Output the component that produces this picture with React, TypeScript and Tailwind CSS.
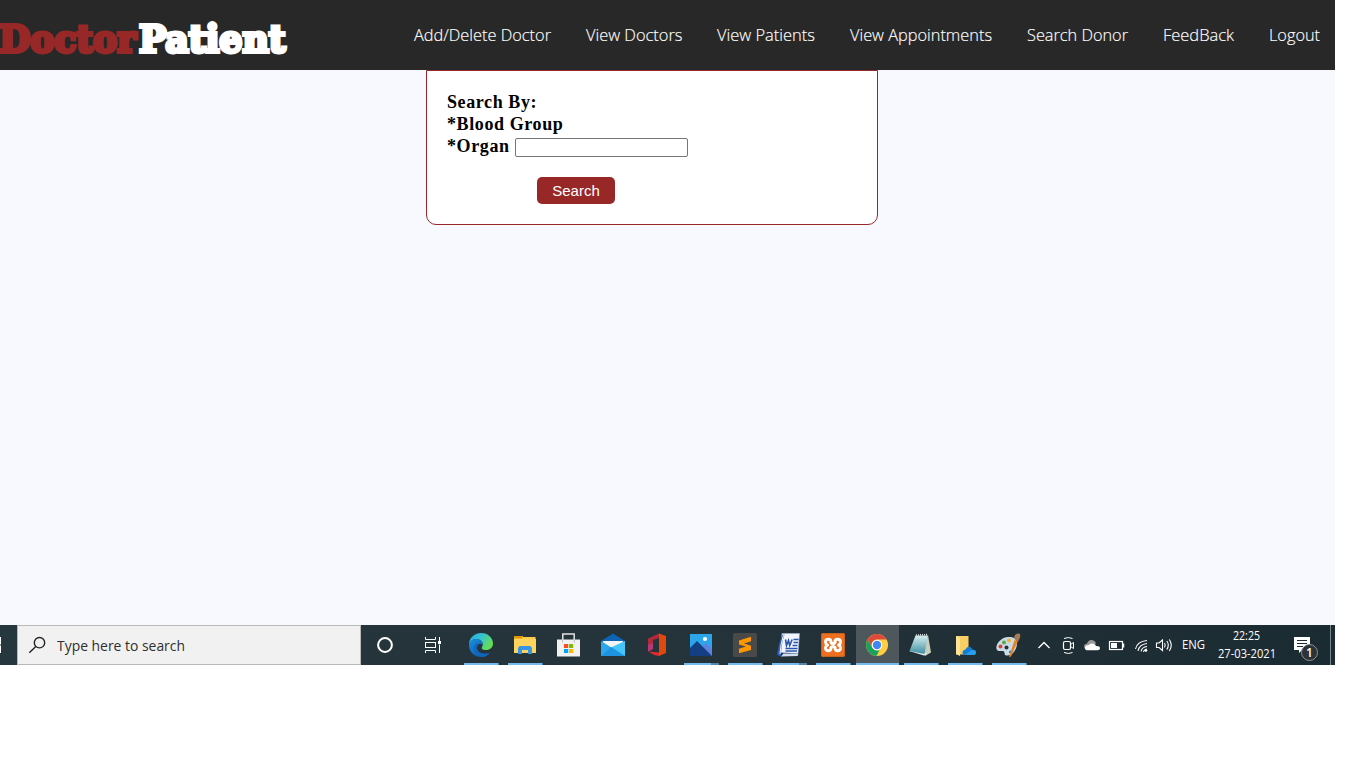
import React from "react";

const NAV = [
  { label: "Add/Delete Doctor", cls: "w-[172px]", len: 137 },
  { label: "View Doctors", cls: "w-[131px]", len: 96.5 },
  { label: "View Patients", cls: "w-[133px]", len: 98 },
  { label: "View Appointments", cls: "w-[177px]", len: 142 },
  { label: "Search Donor", cls: "w-[136px]", len: 101 },
  { label: "FeedBack", cls: "w-[106px]", len: 71 },
  { label: "Logout", cls: "w-[66px]", len: 51 },
];

function Logo() {
  return (
    <svg width="300" height="70" className="shrink-0 overflow-visible" role="img" aria-label="DoctorPatient">
      <g fontFamily="'DejaVu Serif', serif" fontWeight="bold" fontSize="38" strokeWidth="3.8" strokeLinejoin="miter" strokeMiterlimit="2">
        <text x="-1" y="52" textLength="137" lengthAdjust="spacingAndGlyphs" fill="#982828" stroke="#982828">Doctor</text>
        <text x="139" y="52" textLength="146.500" lengthAdjust="spacingAndGlyphs" fill="#fff" stroke="#fff">Patient</text>
      </g>
    </svg>
  );
}

function Edge() {
  return (
    <>
      <defs>
        <linearGradient id="edgeTop" x1="0" y1="0" x2="1" y2=".5">
          <stop offset="0" stopColor="#2aa9e6" />
          <stop offset=".5" stopColor="#34c3d0" />
          <stop offset="1" stopColor="#66dd55" />
        </linearGradient>
        <linearGradient id="edgeLow" x1="0" y1="0" x2="1" y2="1">
          <stop offset="0" stopColor="#1b8fe0" />
          <stop offset="1" stopColor="#0b4ea2" />
        </linearGradient>
      </defs>
      <path d="M10 19C10.500 12 16 8 22 8c7 0 12 5 12 10.500 0 4-3 6.500-7 6.500-3.500 0-5-1.500-4-3 1.500-2 1-6-3-7.500-4-1.500-8 .500-10 4.500z" fill="url(#edgeTop)" />
      <path d="M10 19c1.500-4 5.500-6 10-4.500 2.500.9 3.800 3 3.600 5-3-2-6 .5-5.600 4 .5 4 5.500 6.500 12.500 4.500-2 2.600-5 4-8.500 4-7 0-12.500-5.500-12-13z" fill="url(#edgeLow)" />
      <path d="M19 18c-3 1-4.500 4-3.500 7 1 3.500 4 6.200 8 7 3-.1 5.600-1.600 7.300-4-7 2-12.300-.500-12.800-4.500-.3-2.500.6-4 1-5.500z" fill="#0f65ba" />
    </>
  );
}

function Explorer() {
  return (
    <>
      <path d="M11 11h9v1h12.500v15H11z" fill="#fbcb4c" />
      <path d="M11 11h8.500v2.500H11z" fill="#dc9808" />
      <path d="M11 14h22v14H11z" fill="#ffd45c" />
      <path d="M15 29v-6l1.500-2h11l1.500 2v6h-4v-4h-6v4z" fill="#3795e3" />
      <path d="M19 25h6v3h-6z" fill="#ffd45c" />
    </>
  );
}

function Store() {
  return (
    <>
      <path d="M15.800 19V9h11.400v10" fill="none" stroke="#e4e4e4" strokeWidth="1.500" />
      <path d="M10 14.500h23V31.500H10z" fill="#f1f1f1" />
      <path d="M15.500 14.500v3M27.300 14.500v3" stroke="#bbb" />
      <path d="M17 19h4.200v4H17z" fill="#f25022" />
      <path d="M22 19h4.200v4H22z" fill="#7fba00" />
      <path d="M17 24h4.200v4H17z" fill="#00a4ef" />
      <path d="M22 24h4.200v4H22z" fill="#ffb900" />
    </>
  );
}

function Mail() {
  return (
    <>
      <path d="M10 16 22 8.500 34 16v3H10z" fill="#0d63b5" />
      <path d="M12 16h20v3l-10 7-10-7z" fill="#f4f4f4" />
      <path d="M10 16l12 7.500L34 16v15H10z" fill="#29a9ec" />
      <path d="M34 16 20 22.500 34 31z" fill="#45c4f7" />
      <path d="M10 31h24L20 22z" fill="#1e93df" />
    </>
  );
}

function Office() {
  return (
    <>
      <path d="M13 13.500 24 8.500v4.500l-6 2v9l-5 2.500z" fill="#b02a38" />
      <path d="M13 20l5-2v6l-5 2.500z" fill="#b53a77" />
      <path d="M24 8.500l7 2.500v17l-7 3z" fill="#e1480b" />
      <path d="M13.500 26.500 24 27.500v3.500l-5-1z" fill="#e22a2c" />
    </>
  );
}

function Photos() {
  return (
    <>
      <path d="M11 9h22v22H11z" fill="#2ba6ea" />
      <path d="M20 25l7-7 6 6v7H20z" fill="#5e83dc" />
      <path d="M11 23l7-7 15 15H11z" fill="#153f83" />
      <circle cx="26" cy="14" r="2.100" fill="#fff" />
    </>
  );
}

function Sublime() {
  return (
    <>
      <rect x="10" y="8" width="24" height="24" rx="1.500" fill="#494949" />
      <path d="M16 15.500l12-3.700v4.400l-7 2.300 7 2.200v4.400L16 28.200v-4.400l7-2.200-7-2.200z" fill="#ff9800" />
    </>
  );
}

function Word() {
  return (
    <>
      <path d="M15 8.500h17.500l-1.500 20-18-1z" fill="#f3f6fc" stroke="#9fb3da" strokeWidth=".6" />
      <path d="M15 10q-3.500 9-5 20l4 1.500q0-12 3.500-22z" fill="#2b5db8" />
      <path d="M16.500 10q-3 9-3.500 19" stroke="#fff" strokeWidth="1" fill="none" />
      <path d="M18.500 14.500l1 6 2-5 1.200 5 2.500-6" fill="none" stroke="#2854ad" strokeWidth="1.600" />
      <path d="M26.500 14.500h5M26.500 17.500h4.500M25.500 20.500h5M18.500 23.500h12M18.500 26h11.500" stroke="#2854ad" strokeWidth="1.500" />
      <path d="M14 31.500l2.500-3 15 .5-1 2z" fill="#d2ddf1" />
    </>
  );
}

function Xampp() {
  return (
    <>
      <rect x="10" y="8" width="24" height="24" rx="2" fill="#ee6f1e" />
      <rect x="10.500" y="8.500" width="23" height="23" rx="2" fill="none" stroke="#c9601c" />
      <g fill="none" stroke="#fff" strokeWidth="2.900" strokeLinejoin="round" strokeLinecap="round">
        <path d="M20 17q0-2.700-2.500-2.700-3 0-3 2.700 0 2 2 3-2 1-2 3 0 2.700 3 2.700 2.500 0 2.500-2.700" />
        <path d="M24 17q0-2.700 2.500-2.700 3 0 3 2.700 0 2-2 3 2 1 2 3 0 2.700-3 2.700-2.500 0-2.500-2.700" />
        <path d="M20 17.500l4 5M24 17.500l-4 5" />
      </g>
    </>
  );
}

function Chrome() {
  return (
    <>
      <circle cx="22" cy="20" r="11" fill="#ffce44" />
      <path d="M12.500 14.500A11 11 0 0 1 31.500 14.500H22a5.500 5.500 0 0 0-4.800 8.200z" fill="#dc4a3c" />
      <path d="M12.500 14.500l4.700 8.200A5.500 5.500 0 0 0 22 25.500q1.500 0 2.600-.6L21.500 31A11 11 0 0 1 12.500 14.500z" fill="#1ba15f" />
      <circle cx="22" cy="20" r="5.200" fill="#fff" />
      <circle cx="22" cy="20" r="4.200" fill="#4285f4" />
    </>
  );
}

function Notepad() {
  return (
    <>
      <defs>
        <linearGradient id="note" x1="0" y1="0" x2="0" y2="1">
          <stop offset="0" stopColor="#d8eef0" />
          <stop offset="1" stopColor="#3c8fa2" />
        </linearGradient>
      </defs>
      <path d="M29 10l3 17.500-6 3.500-2-3z" fill="#c9cdbb" />
      <path d="M10 26l15 4.500 3-2-12-3z" fill="#e9eef0" />
      <path d="M16.500 10.500h12.500L25.500 29 10.500 26z" fill="url(#note)" />
      <path d="M17 10l12-.500" stroke="#e0e0e0" strokeWidth="1.500" strokeDasharray="1 1" />
    </>
  );
}

function DriveFolder() {
  return (
    <>
      <path d="M13 11h12.500v15L22 29.500h-9z" fill="#f8cf65" />
      <path d="M13 11l4 2v18l-4-2z" fill="#ffe292" />
      <path d="M22 30q-3-.500-2.500-3t3-2.500q1.500-3.500 4.500-2.500 2 .500 2.500 2.500 3.500 0 3.500 3 0 2-2 2.500z" fill="#127cda" />
      <path d="M22 30l6-4.500q4.500-1.500 5 2 0 2-2 2.500z" fill="#28a0ec" />
    </>
  );
}

function Paint() {
  return (
    <>
      <path d="M9.500 24c-1-5 4-11 11-12 6-.7 10 2 9.500 7-.5 7-5.500 12-10.500 11.500-3-.3-1-4-3.500-4.500-2-.4-5.500 1-6.500-2z" fill="#c9dbe7" />
      <circle cx="13.500" cy="21.500" r="2" fill="#db4132" />
      <circle cx="17" cy="17.500" r="2" fill="#59aa3f" />
      <circle cx="22" cy="15.500" r="2" fill="#efb234" />
      <circle cx="19.500" cy="22.500" r="2" fill="#263238" />
      <circle cx="23.500" cy="27" r="1.600" fill="#3979c2" />
      <path d="M27.500 15l3.500 1-7 15.500-2 .5z" fill="#e48526" />
      <path d="M27 13.500c0-3 2-5.500 5-5 2.300.5 1 5-1 8z" fill="#a87b56" />
    </>
  );
}

type App = { name: string; Icon: () => React.ReactElement; state: "none" | "open" | "multi" | "active" };

const APPS: App[] = [
  { name: "Edge", Icon: Edge, state: "open" },
  { name: "Explorer", Icon: Explorer, state: "open" },
  { name: "Store", Icon: Store, state: "none" },
  { name: "Mail", Icon: Mail, state: "none" },
  { name: "Office", Icon: Office, state: "none" },
  { name: "Photos", Icon: Photos, state: "multi" },
  { name: "Sublime Text", Icon: Sublime, state: "open" },
  { name: "Word", Icon: Word, state: "multi" },
  { name: "XAMPP", Icon: Xampp, state: "open" },
  { name: "Chrome", Icon: Chrome, state: "active" },
  { name: "Notepad", Icon: Notepad, state: "open" },
  { name: "OneDrive folder", Icon: DriveFolder, state: "open" },
  { name: "Paint", Icon: Paint, state: "open" },
];

function AppButton({ app }: { app: App }) {
  const { Icon, state } = app;
  return (
    <svg width="44" height="40" viewBox="0 0 44 40" className="shrink-0" role="img" aria-label={app.name}>
      {state === "active" && <rect x="1" width="43" height="40" fill="#4e575c" />}
      <Icon />
      {state === "active" && <rect x="1" y="38" width="43" height="2" fill="#76b9ed" />}
      {state === "open" && <rect x="5" y="38" width="34.500" height="2" fill="#76b9ed" />}
      {state === "multi" && (
        <>
          <rect x="5" y="38" width="27" height="2" fill="#76b9ed" />
          <rect x="32" y="38" width="8" height="2" fill="#5587aa" />
        </>
      )}
    </svg>
  );
}

function Tray() {
  return (
    <svg width="146" height="40" viewBox="1031 0 146 40" className="shrink-0" fill="none" stroke="#fff" strokeWidth="1.200">
      <path d="M1038.500 23l5.500-5.500 5.500 5.500" strokeWidth="1.400" />
      <rect x="1063.500" y="16.500" width="7" height="8" rx="1.500" />
      <path d="M1070.500 19.500l3-2v6l-3-2M1064 13.500q4.500-2 8.500 0M1064 27.500q4.500 2 8.500 0" strokeWidth="1" />
      <path d="M1087 24q-3 0-3-2.500t3-3q1.500-4 5-3.500 3 .500 4 3l-3 4z" fill="#999" stroke="none" />
      <path d="M1087 25.300q-2.500-.5-2-3t3.500-2q2-2.500 5-1.500 2 .500 2.500 2.200 4-.2 4 2.300 0 2-2.500 2z" fill="#fff" stroke="none" />
      <rect x="1109.500" y="16.500" width="13" height="8" />
      <path d="M1111 18h6v5h-6z" fill="#fff" stroke="none" />
      <path d="M1123.500 18.500v4" strokeWidth="1.500" />
      <path d="M1135.500 24q1.500-7.500 11.500-8.500M1138 26q1-6.500 9-7.500M1141 26.500q1-4.500 6-5M1143.500 27q.500-2.500 3.500-3" strokeWidth="1.100" />
      <circle cx="1146" cy="25.500" r="1.300" fill="#fff" stroke="none" />
      <path d="M1156.500 18h2.500l3.500-3v10.500l-3.500-3h-2.500zM1164.500 18q1.500 2 0 4.500M1166.800 16q3 4 0 8.500M1169.300 14.500q4 5.500 0 11.500" strokeWidth="1.100" />
    </svg>
  );
}

function Taskbar() {
  return (
    <div className="flex h-10 w-[1335px] shrink-0 overflow-hidden bg-gradient-to-r from-[#26373e] via-[#25333a] to-[#1b2b32] font-['Open_Sans','Noto_Sans',sans-serif]">
      <svg width="17" height="40" className="shrink-0">
        <path d="M0 12h1v7.500H0zM0 20.500h1V28H0z" fill="#fff" />
      </svg>
      <div className="flex w-[344px] shrink-0 items-center border border-[#b9b9b9] bg-[#f1f1f1]">
        <svg width="39" height="38" viewBox="18 1 39 38" className="shrink-0" fill="none" stroke="#222" strokeWidth="1.400">
          <circle cx="39.500" cy="17.700" r="5.200" />
          <path d="M35.800 21.400 29.300 27.700" />
        </svg>
        <svg width="140" height="38" className="shrink-0">
          <text x="0" y="25" fontSize="15" textLength="128" lengthAdjust="spacingAndGlyphs" fill="#2f2f2f">Type here to search</text>
        </svg>
      </div>
      <svg width="98" height="40" viewBox="361 0 98 40" className="shrink-0" fill="none" stroke="#fff">
        <circle cx="385" cy="20" r="6.900" strokeWidth="2" />
        <path d="M425.500 12v2.500h10V12M425.500 28v-2.500h10V28M439.500 12v4M439.500 19.500V28" strokeWidth="1" />
        <rect x="425.500" y="17.500" width="10" height="5" />
        <path d="M438 16h3v3h-3z" fill="#fff" stroke="none" />
      </svg>
      {APPS.map((a) => (
        <AppButton key={a.name} app={a} />
      ))}
      <Tray />
      <svg width="158" height="40" viewBox="1177 0 158 40" className="shrink-0">
        <g fill="#fff" fontSize="12">
          <text x="1182" y="24" textLength="23" lengthAdjust="spacingAndGlyphs">ENG</text>
          <text x="1233" y="15" textLength="27" lengthAdjust="spacingAndGlyphs">22:25</text>
          <text x="1218" y="33" textLength="58" lengthAdjust="spacingAndGlyphs">27-03-2021</text>
        </g>
        <path d="M1294 12h16v13h-8l-3 3v-3h-5z" fill="#fff" />
        <path d="M1297 15.500h10M1297 18.500h10M1297 21.500h6" stroke="#1e2c33" />
        <circle cx="1309.500" cy="27.500" r="8" fill="#2c3337" stroke="#8b9295" />
        <text x="1306" y="31.500" fontSize="12" fontWeight="600" fill="#fff">1</text>
        <path d="M1330.500 0v40" stroke="#7b858a" />
      </svg>
    </div>
  );
}

export default function App() {
  return (
    <div className="flex h-screen w-full flex-col overflow-hidden bg-white">
      <header className="flex h-[70px] w-[1335px] shrink-0 bg-[#282828]">
        <Logo />
        <nav className="ml-[114px] flex items-center font-['Open_Sans',sans-serif] text-base font-light text-white">
          {NAV.map((n) => (
            <a key={n.label} href="#" className={n.cls + " shrink-0"}>
              <svg height="24" className="block w-full overflow-visible">
                <text x="0" y="18" fill="#fff" stroke="#fff" strokeWidth=".15" textLength={n.len} lengthAdjust="spacingAndGlyphs">{n.label}</text>
              </svg>
            </a>
          ))}
        </nav>
      </header>
      <main className="h-[555px] w-[1335px] shrink-0 bg-[#f8f8ff]">
        <form className="ml-[426px] h-[155px] w-[452px] rounded-b-[10px] border border-[#982828] bg-white px-5 pt-5 font-['Liberation_Serif',serif] text-[18px] leading-[22px] font-bold tracking-[0.6px] text-black">
          <div>Search By:</div>
          <div>*Blood Group</div>
          <label className="flex h-[22px]">
            <span className="w-[68px]">*Organ</span>
            <input type="text" className="mt-[3px] h-[19px] w-[173px] rounded-[2px] border border-[#767676] bg-white" />
          </label>
          <button type="button" className="mt-5 ml-[90px] block h-[27px] w-[78px] rounded-[5px] bg-[#982828] font-['Liberation_Sans',sans-serif] text-[15px] leading-[27px] font-normal tracking-normal text-white">
            Search
          </button>
        </form>
      </main>
      <Taskbar />
    </div>
  );
}
